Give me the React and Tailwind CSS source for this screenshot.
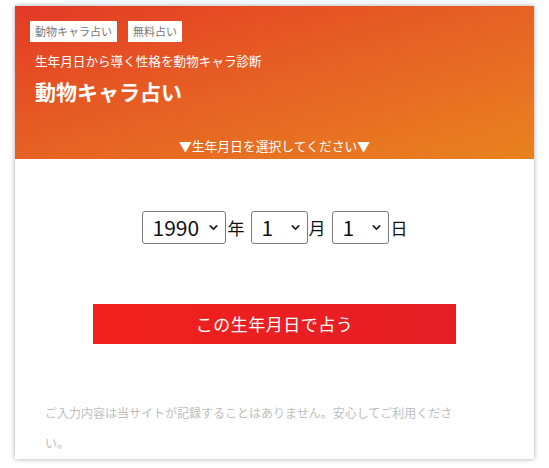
import { ChevronDown } from 'lucide-react'

const years = Array.from({ length: 100 }, (_, i) => 1930 + i)
const months = Array.from({ length: 12 }, (_, i) => i + 1)
const days = Array.from({ length: 31 }, (_, i) => i + 1)

function DateSelect({ options, value, width }) {
  return (
    <div className={`relative ${width}`}>
      <select
        defaultValue={value}
        className="w-full h-[33px] appearance-none border border-[#7a7a7a] rounded-[3px] bg-white pl-[10px] text-[21px] leading-none text-[#111]"
      >
        {options.map(o => (
          <option key={o} value={o}>{o}</option>
        ))}
      </select>
      <ChevronDown
        size={13}
        strokeWidth={3.2}
        className="absolute right-[6px] top-[10px] text-[#222] pointer-events-none"
      />
    </div>
  )
}

export default function App() {
  return (
    <div className="min-h-[468px] bg-white pt-[6px] font-['Noto_Sans_CJK_JP',sans-serif]">
      <div className="ml-[15px] w-[519px] bg-white shadow-[0_0_5px_rgba(0,0,0,0.35)]">

        {/* Header */}
        <div className="h-[153px] bg-linear-to-br from-[#e33825] to-[#e8821f] pt-[15px] pl-[15px]">
          <div className="flex gap-[11px]">
            <span className="bg-white px-[5px] h-[21px] leading-[21px] text-[11px] text-[#777]">動物キャラ占い</span>
            <span className="bg-white px-[5px] h-[21px] leading-[21px] text-[11px] text-[#777]">無料占い</span>
          </div>
          <p className="pl-[5px] mt-[11px] text-[12.6px] leading-[16px] text-white">
            生年月日から導く性格を動物キャラ診断
          </p>
          <h1 className="pl-[5px] mt-[9px] text-[21px] leading-[26px] font-bold text-white">
            動物キャラ占い
          </h1>
          <p className="mt-[34px] pr-[15px] text-center text-[12.8px] leading-[16px] text-white">
            ▼生年月日を選択してください▼
          </p>
        </div>

        {/* Body */}
        <div className="pt-[52px] pb-[1px]">
          <div className="flex justify-center items-center text-[17px] text-[#111]">
            <DateSelect options={years} value={1990} width="w-[84px]" />
            <span className="ml-[2px] mr-[6px]">年</span>
            <DateSelect options={months} value={1} width="w-[57px]" />
            <span className="ml-[1px] mr-[6px]">月</span>
            <DateSelect options={days} value={1} width="w-[57px]" />
            <span className="ml-[2px]">日</span>
          </div>

          <div className="flex justify-center mt-[60px]">
            <button className="w-[363px] h-[40px] bg-linear-to-r from-[#f2201a] to-[#e51e26] text-white text-[17px] tracking-[0.5px]">
              この生年月日で占う
            </button>
          </div>

          <p className="ml-[30px] mt-[54px] w-[414px] text-[12px] leading-[30px] text-[#bdbdbd]">
            ご入力内容は当サイトが記録することはありません。安心してご利用ください。
          </p>
        </div>
      </div>
    </div>
  )
}
